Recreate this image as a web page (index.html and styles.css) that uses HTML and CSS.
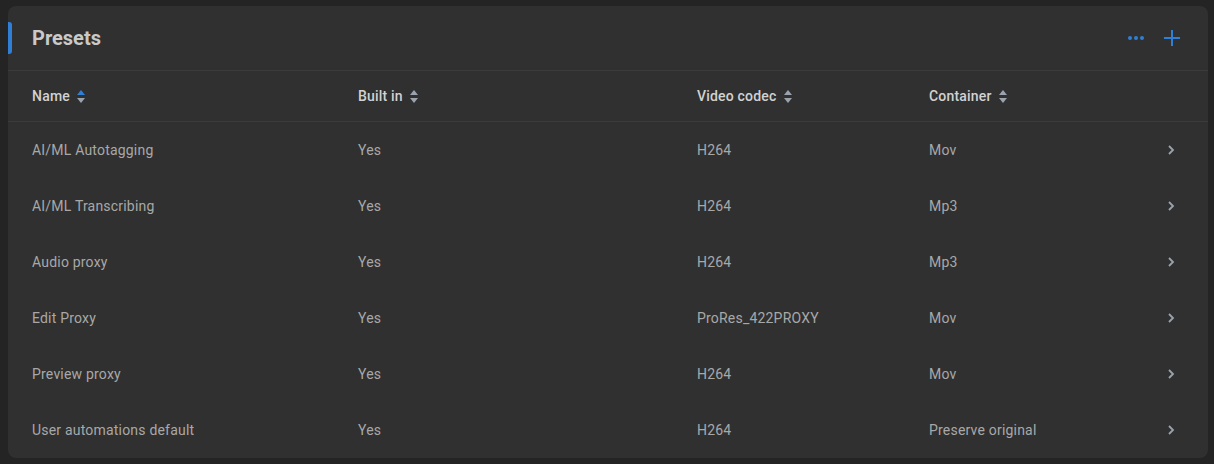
FILE: index.html
```html
<!DOCTYPE html>
<html lang="en">
<head>
<meta charset="utf-8"/>
<meta content="width=device-width, initial-scale=1.0" name="viewport"/>
<title>Presets</title>
<link rel="stylesheet" href="styles.css">
</head>
<body>
<div class="card">
  <div class="card-head">
    <span class="accent"></span>
    <h1>Presets</h1>
    <div class="actions">
      <button class="icon-btn" aria-label="More">
        <svg width="18" height="18" viewBox="0 0 18 18"><circle cx="3" cy="9" r="2" fill="#2f7fd6"/><circle cx="9" cy="9" r="2" fill="#2f7fd6"/><circle cx="15" cy="9" r="2" fill="#2f7fd6"/></svg>
      </button>
      <button class="icon-btn" aria-label="Add">
        <svg width="18" height="18" viewBox="0 0 18 18"><path d="M9 1v16M1 9h16" stroke="#2f7fd6" stroke-width="2"/></svg>
      </button>
    </div>
  </div>

  <div class="row head-row">
    <div class="th">Name <span class="sort active"></span></div>
    <div class="th">Built in <span class="sort"></span></div>
    <div class="th">Video codec <span class="sort"></span></div>
    <div class="th">Container <span class="sort"></span></div>
    <div></div>
  </div>

  <div id="rows"></div>
</div>

<script>
  const presets = [
    ['AI/ML Autotagging', 'Yes', 'H264', 'Mov'],
    ['AI/ML Transcribing', 'Yes', 'H264', 'Mp3'],
    ['Audio proxy', 'Yes', 'H264', 'Mp3'],
    ['Edit Proxy', 'Yes', 'ProRes_422PROXY', 'Mov'],
    ['Preview proxy', 'Yes', 'H264', 'Mov'],
    ['User automations default', 'Yes', 'H264', 'Preserve original']
  ];

  const chevron = '<svg width="10" height="12" viewBox="0 0 10 12"><path d="M3 2l4 4-4 4" fill="none" stroke="#9aa3ad" stroke-width="1.8"/></svg>';

  const rows = document.getElementById('rows');
  rows.innerHTML = presets.map(p =>
    `<div class="row">${p.map(c => `<div class="td">${c}</div>`).join('')}<div class="go">${chevron}</div></div>`
  ).join('');
</script>
</body>
</html>
```

FILE: styles.css
```css
body {
  margin: 0;
  padding: 6px 6px 6px 8px;
  background: #242424;
  font-family: Roboto, "Liberation Sans", sans-serif;
  font-size: 14px;
  letter-spacing: 0.2px;
}
.card {
  background: #303030;
  border-radius: 8px;
  width: 1200px;
  overflow: hidden;
}
.card-head {
  height: 64px;
  display: flex;
  align-items: center;
  border-bottom: 1px solid #3b3b3b;
  padding-right: 27px;
}
.accent {
  width: 4px;
  height: 32px;
  background: #2f7fd6;
  border-radius: 0 3px 3px 0;
  margin-right: 20px;
}
h1 {
  margin: 0;
  font-size: 20px;
  font-weight: 700;
  color: #c9c9c9;
  letter-spacing: 0;
  flex: 1;
}
.actions {
  display: flex;
  gap: 18px;
  align-items: center;
}
.icon-btn {
  background: none;
  border: 0;
  padding: 0;
  width: 18px;
  height: 18px;
  display: flex;
}
.row {
  display: grid;
  grid-template-columns: 326px 339px 232px 1fr 24px;
  align-items: center;
  height: 56px;
  padding: 0 24px;
  color: #a8a8a8;
}
.head-row {
  height: 50px;
  border-bottom: 1px solid #3b3b3b;
}
.th {
  display: flex;
  align-items: center;
  gap: 7px;
  font-weight: 500;
  color: #d2d2d2;
}
.sort {
  width: 8px;
  height: 13px;
  position: relative;
}
.sort::before,
.sort::after {
  content: "";
  position: absolute;
  left: 0;
  border-left: 4px solid transparent;
  border-right: 4px solid transparent;
}
.sort::before {
  top: 0;
  border-bottom: 5px solid #9aa3ad;
}
.sort::after {
  bottom: 0;
  border-top: 5px solid #9aa3ad;
}
.sort.active::before {
  border-bottom-color: #2f7fd6;
}
.go {
  display: flex;
  justify-content: flex-end;
  margin-right: 8px;
}
```
